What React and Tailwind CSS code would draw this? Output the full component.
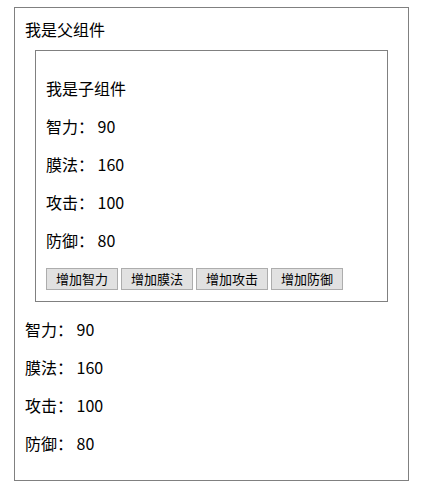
import React, { useState } from "react";

const font = { fontFamily: '"Noto Sans CJK SC", "Noto Sans", sans-serif' };

const Child = ({ stats, onAdd }) => {
  return (
    <div className="mx-[10px] mt-[10px] border border-[#808080] px-[10px] pt-[10px] pb-[11px]">
      <div className="mt-4 flex flex-col gap-4">
        <p>我是子组件</p>
        <p>智力： {stats.zhili}</p>
        <p>膜法： {stats.mofa}</p>
        <p>攻击： {stats.gongji}</p>
        <p>防御： {stats.fangyu}</p>
      </div>
      <div className="mt-[17px] flex gap-[3px]">
        <button onClick={() => onAdd("zhili")} className="h-[22px] w-[72px] border border-[#adadad] bg-[#e1e1e1] text-[13px] leading-[20px] text-black">
          增加智力
        </button>
        <button onClick={() => onAdd("mofa")} className="h-[22px] w-[72px] border border-[#adadad] bg-[#e1e1e1] text-[13px] leading-[20px] text-black">
          增加膜法
        </button>
        <button onClick={() => onAdd("gongji")} className="h-[22px] w-[72px] border border-[#adadad] bg-[#e1e1e1] text-[13px] leading-[20px] text-black">
          增加攻击
        </button>
        <button onClick={() => onAdd("fangyu")} className="h-[22px] w-[72px] border border-[#adadad] bg-[#e1e1e1] text-[13px] leading-[20px] text-black">
          增加防御
        </button>
      </div>
    </div>
  );
};

const App = () => {
  const [stats, setStats] = useState({ zhili: 90, mofa: 160, gongji: 100, fangyu: 80 });

  const handleAdd = (key) => {
    setStats((prev) => ({ ...prev, [key]: prev[key] + 1 }));
  };

  return (
    <div className="min-h-[499px] bg-white pl-[14px] pt-[7px] text-black" style={font}>
      <div className="w-[395px] border border-[#808080] p-[10px] text-[16px] leading-[22px]">
        <div>我是父组件</div>
        <Child stats={stats} onAdd={handleAdd} />
        <div className="mt-4 mb-4 flex flex-col gap-4">
          <p>智力： {stats.zhili}</p>
          <p>膜法： {stats.mofa}</p>
          <p>攻击： {stats.gongji}</p>
          <p>防御： {stats.fangyu}</p>
        </div>
      </div>
    </div>
  );
};

export default App;
